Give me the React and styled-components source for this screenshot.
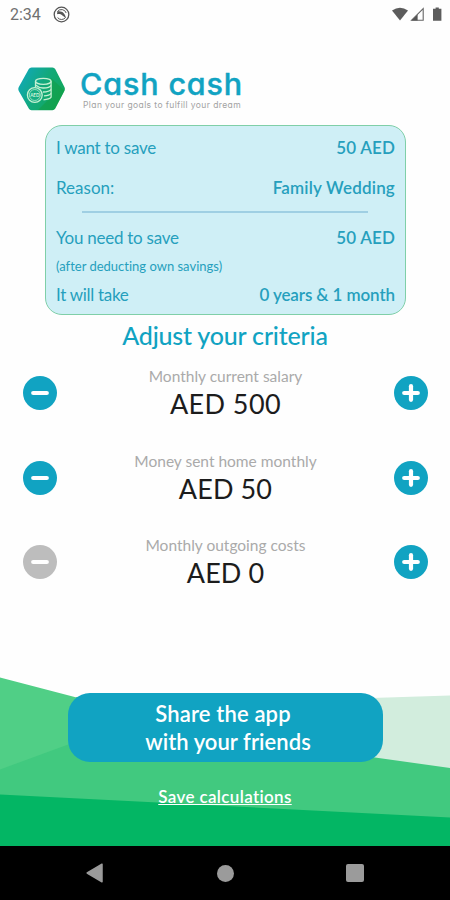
import React from 'react'
import styled, { createGlobalStyle, ThemeProvider } from 'styled-components'

const theme = {
  colorPrimary: '#11a3c2',
  colorSummary: '#cfeff6',
  colorSummaryText: '#269fbd',
  colorMuted: '#aaaaaa',
  colorDisabled: '#bdbdbd',
  colorStatus: '#707070',
  colorNav: '#9b9b9b'
}

const criteria = [
  { label: 'Monthly current salary', value: 'AED 500', canDecrease: true, spacing: 0.4 },
  { label: 'Money sent home monthly', value: 'AED 50', canDecrease: true, spacing: 0.1 },
  { label: 'Monthly outgoing costs', value: 'AED 0', canDecrease: false, spacing: 0.1 }
]

const DataSaverIcon = () => (
  <svg width="17" height="17" viewBox="0 0 17 17" fill="none" stroke="#555">
    <circle cx="8.5" cy="8.5" r="7.3" strokeWidth="1.3" />
    <path d="M4.6 11.6A5 5 0 0 0 12.6 11.4M4.4 5.6A5 5 0 0 1 13.2 7" strokeWidth="1" />
    <path d="M4.4 5.4C9 4.4 12.4 7.4 12.8 12L9.4 9.6C8.6 8.4 7 7.8 4 8.2Z" fill="#555" stroke="none" />
  </svg>
)

const StatusIcons = () => (
  <svg width="52" height="16" viewBox="0 0 52 16">
    <path d="M0 3.6Q8 -2.2 16 3.6L8 13.6Z" fill="#5c5c5c" />
    <path d="M31.2 1.5V13.2H19.6Z" fill="none" stroke="#666" strokeWidth="1.1" />
    <path d="M25.6 7.4V13.4H19.4Z" fill="#555" />
    <path d="M43.6 0.5H46.8V1.8H49.4V13.8H41V1.8H43.6Z" fill="#5c5c5c" />
  </svg>
)

const Logo = () => (
  <svg width="48" height="44" viewBox="0 0 48 44">
    <defs>
      <linearGradient id="hexagon" x1="0" y1="0.2" x2="1" y2="0.7">
        <stop offset="0" stopColor="#10a9ba" />
        <stop offset="0.5" stopColor="#12a97b" />
        <stop offset="1" stopColor="#12a757" />
      </linearGradient>
    </defs>
    <path d="M13.5 0.5H34.5Q36.3 0.5 37.2 2L46.4 20Q47.4 22 46.4 24L37.2 41.6Q36.3 43.2 34.5 43.2H13.5Q11.7 43.2 10.8 41.6L0.8 24Q-0.2 22 0.8 20L10.8 2Q11.7 0.5 13.5 0.5Z" fill="url(#hexagon)" />
    <path d="M33 11L46.4 23.6 37.2 41.6 34.5 43H20L32 31Z" fill="#129c3c" opacity="0.45" />
    <g fill="none" stroke="#c4f0d2" strokeWidth="1.3">
      <ellipse cx="25.3" cy="14.3" rx="7.8" ry="3" />
      <path d="M17.5 14.3V20M33.1 14.3V30.2Q31.5 32.5 25.5 32.8" />
      <path d="M17.5 18.1Q21 21.2 25.5 21Q31.5 20.8 33.1 18.3M25 25Q31.5 24.7 33.1 22.3M26 28.9Q31.5 28.5 33.1 26.3" />
      <circle cx="16.8" cy="28" r="7.4" fill="#16ad82" />
      <circle cx="16.8" cy="28" r="5.5" strokeWidth="0.7" />
    </g>
    <LogoText x="16.8" y="29.7" textAnchor="middle">AED</LogoText>
  </svg>
)

const StepIcon = ({ plus }) => (
  <svg width="18" height="18" viewBox="0 0 18 18" stroke="#fff" strokeWidth="4.2" strokeLinecap="round">
    <path d="M2.2 9H15.8" />
    {plus && <path d="M9 2.2V15.8" />}
  </svg>
)

const Hills = () => (
  <Backdrop viewBox="0 0 450 169" preserveAspectRatio="none">
    <path d="M340 22L450 18.5V100H340Z" fill="#d2eddd" />
    <path d="M76 20L200 54 375 80.5 450 91V169H0V90L64 66Z" fill="#41c97f" />
    <path d="M0 0.5L90 24V60L64 69 0 92.5Z" fill="#50cf86" />
    <path d="M0 117.5L450 140.5V169H0Z" fill="#03b664" />
  </Backdrop>
)

const Stepper = ({ label, value, canDecrease, spacing }) => (
  <StepperRow>
    <RoundButton disabled={!canDecrease} aria-label={`Decrease ${label}`}><StepIcon /></RoundButton>
    <Reading>
      <Label>{label}</Label>
      <Value $spacing={spacing}>{value}</Value>
    </Reading>
    <RoundButton aria-label={`Increase ${label}`}><StepIcon plus /></RoundButton>
  </StepperRow>
)

export default () => (
  <ThemeProvider theme={theme}>
    <GlobalStyle />
    <Screen>
      <StatusBar>
        <Clock>2:34</Clock>
        <DataSaverIcon />
        <Spacer />
        <StatusIcons />
      </StatusBar>
      <Header>
        <Logo />
        <Brand>
          <BrandName>Cash cash</BrandName>
          <Tagline>Plan your goals to fulfill your dream</Tagline>
        </Brand>
      </Header>
      <Summary>
        <SummaryRow $height={42}><Term>I want to save</Term><Amount $spacing={0.15}>50 AED</Amount></SummaryRow>
        <SummaryRow $height={39}><Term $spacing={0}>Reason:</Term><Amount $spacing={0.2}>Family Wedding</Amount></SummaryRow>
        <Divider />
        <SummaryRow $height={38}><Term>You need to save</Term><Amount $spacing={0.15}>50 AED</Amount></SummaryRow>
        <SummaryRow $height={19}><Note>(after deducting own savings)</Note></SummaryRow>
        <SummaryRow $height={38}><Term $spacing={-0.3}>It will take</Term><Amount $spacing={-0.1}>0 years &amp; 1 month</Amount></SummaryRow>
      </Summary>
      <Heading>Adjust your criteria</Heading>
      <Steppers>
        {criteria.map(item => <Stepper key={item.label} {...item} />)}
      </Steppers>
      <Footer>
        <Hills />
        <ShareButton>
          <ShareLine $spacing={0.15} $shift={-4}>Share the app</ShareLine>
          <ShareLine $spacing={0.05} $shift={6}>with your friends</ShareLine>
        </ShareButton>
        <SaveLink href="#">Save calculations</SaveLink>
      </Footer>
      <NavBar>
        <svg width="18" height="20" viewBox="0 0 18 20"><path d="M16 1.2V18.8L1.2 10Z" fill="#9b9b9b" stroke="#9b9b9b" strokeWidth="1.5" strokeLinejoin="round" /></svg>
        <NavHome />
        <NavRecent />
      </NavBar>
    </Screen>
  </ThemeProvider>
)

const GlobalStyle = createGlobalStyle`
  * {
    box-sizing: border-box;
  }

  body {
    margin: 0;
    background: #fefefe;
    font-family: Lato, 'Open Sans', sans-serif;
    font-variant-ligatures: none;
  }

  button {
    border: 0;
    padding: 0;
    font-family: inherit;
  }
`

const Screen = styled.main`
  width: 450px;
  height: 900px;
  display: flex;
  flex-direction: column;
  overflow: hidden;
`

const StatusBar = styled.div`
  height: 29px;
  padding: 0 6px 0 10px;
  display: flex;
  align-items: center;
  flex-shrink: 0;
`

const Clock = styled.span`
  width: 43px;
  color: ${p => p.theme.colorStatus};
  font: 16px/28px Roboto, sans-serif;
  padding-top: 1px;
`

const Spacer = styled.div`
  flex: 1;
`

const Header = styled.header`
  height: 96px;
  padding: 38px 0 0 18px;
  display: flex;
  align-items: flex-start;
  flex-shrink: 0;
`

const LogoText = styled.text`
  font: bold 4.6px Lato, sans-serif;
  fill: #d4f5dc;
`

const Brand = styled.div`
  padding-left: 14px;
  display: flex;
  flex-direction: column;
`

const BrandName = styled.h1`
  margin: 0;
  color: ${p => p.theme.colorPrimary};
  font: 500 30.5px/33px Inter, sans-serif;
  font-feature-settings: 'cv11';
  -webkit-text-stroke: 0.4px ${p => p.theme.colorPrimary};
  letter-spacing: 0.85px;
  white-space: nowrap;
`

const Tagline = styled.span`
  padding-left: 3px;
  color: #a2a2a2;
  font: 8.5px/11px Inter, sans-serif;
  font-feature-settings: 'cv11';
  letter-spacing: 0.4px;
  white-space: nowrap;
`

const Summary = styled.section`
  width: 361px;
  height: 190px;
  margin-left: 45px;
  padding: 0 10px;
  border: 1px solid #7fcfa8;
  border-radius: 17px;
  background: ${p => p.theme.colorSummary};
  color: ${p => p.theme.colorSummaryText};
  flex-shrink: 0;
`

const SummaryRow = styled.div`
  height: ${p => p.$height}px;
  display: flex;
  align-items: center;
  justify-content: space-between;
  white-space: nowrap;
`

const Term = styled.span`
  font-size: 17px;
  letter-spacing: ${p => p.$spacing ?? -0.25}px;
`

const Amount = styled.span`
  font-size: 17px;
  font-weight: 600;
  letter-spacing: ${p => p.$spacing}px;
`

const Note = styled.span`
  font-size: 13px;
`

const Divider = styled.hr`
  width: 286px;
  height: 2px;
  margin: 4px 0 5px 26px;
  border: 0;
  background: #9fcfe3;
`

const Heading = styled.h2`
  margin: 4px 0 0;
  text-align: center;
  color: ${p => p.theme.colorPrimary};
  font-size: 25px;
  line-height: 32px;
  font-weight: 500;
  letter-spacing: -0.2px;
`

const Steppers = styled.section`
  height: 326px;
  padding-top: 15px;
  flex-shrink: 0;
`

const StepperRow = styled.div`
  height: 84.5px;
  padding: 0 22px 0 23px;
  display: flex;
  align-items: flex-start;
  justify-content: space-between;
`

const RoundButton = styled.button`
  width: 34px;
  height: 34px;
  margin-top: 10px;
  border-radius: 50%;
  display: flex;
  align-items: center;
  justify-content: center;
  background: ${p => p.disabled ? p.theme.colorDisabled : p.theme.colorPrimary};
`

const Reading = styled.div`
  display: flex;
  flex-direction: column;
  align-items: center;
`

const Label = styled.span`
  color: ${p => p.theme.colorMuted};
  font-size: 15.5px;
  line-height: 20px;
`

const Value = styled.span`
  color: #1c1c1c;
  font-size: 27px;
  line-height: 35px;
  letter-spacing: ${p => p.$spacing}px;
`

const Footer = styled.footer`
  position: relative;
  flex: 1;
  padding-top: 16px;
  display: flex;
  flex-direction: column;
  align-items: center;
`

const Backdrop = styled.svg`
  position: absolute;
  inset: 0;
  width: 100%;
  height: 100%;
`

const ShareButton = styled.button`
  position: relative;
  width: 315px;
  height: 69px;
  border-radius: 22px;
  display: flex;
  flex-direction: column;
  align-items: center;
  justify-content: center;
  background: ${p => p.theme.colorPrimary};
  color: #fff;
  font-size: 22px;
  line-height: 28px;
  font-weight: 600;
`

const ShareLine = styled.span`
  padding-left: ${p => Math.max(p.$shift, 0)}px;
  padding-right: ${p => Math.max(-p.$shift, 0)}px;
  letter-spacing: ${p => p.$spacing}px;
`

const SaveLink = styled.a`
  position: relative;
  margin-top: 23px;
  color: #fff;
  font-size: 17px;
  line-height: 24px;
  font-weight: 600;
  letter-spacing: 0.35px;
`

const NavBar = styled.nav`
  height: 54px;
  padding: 0 86px;
  display: flex;
  align-items: center;
  justify-content: space-between;
  flex-shrink: 0;
  background: #000;
`

const NavHome = styled.div`
  width: 17px;
  height: 17px;
  border-radius: 50%;
  background: ${p => p.theme.colorNav};
`

const NavRecent = styled.div`
  width: 18px;
  height: 18px;
  border-radius: 2px;
  background: ${p => p.theme.colorNav};
`
